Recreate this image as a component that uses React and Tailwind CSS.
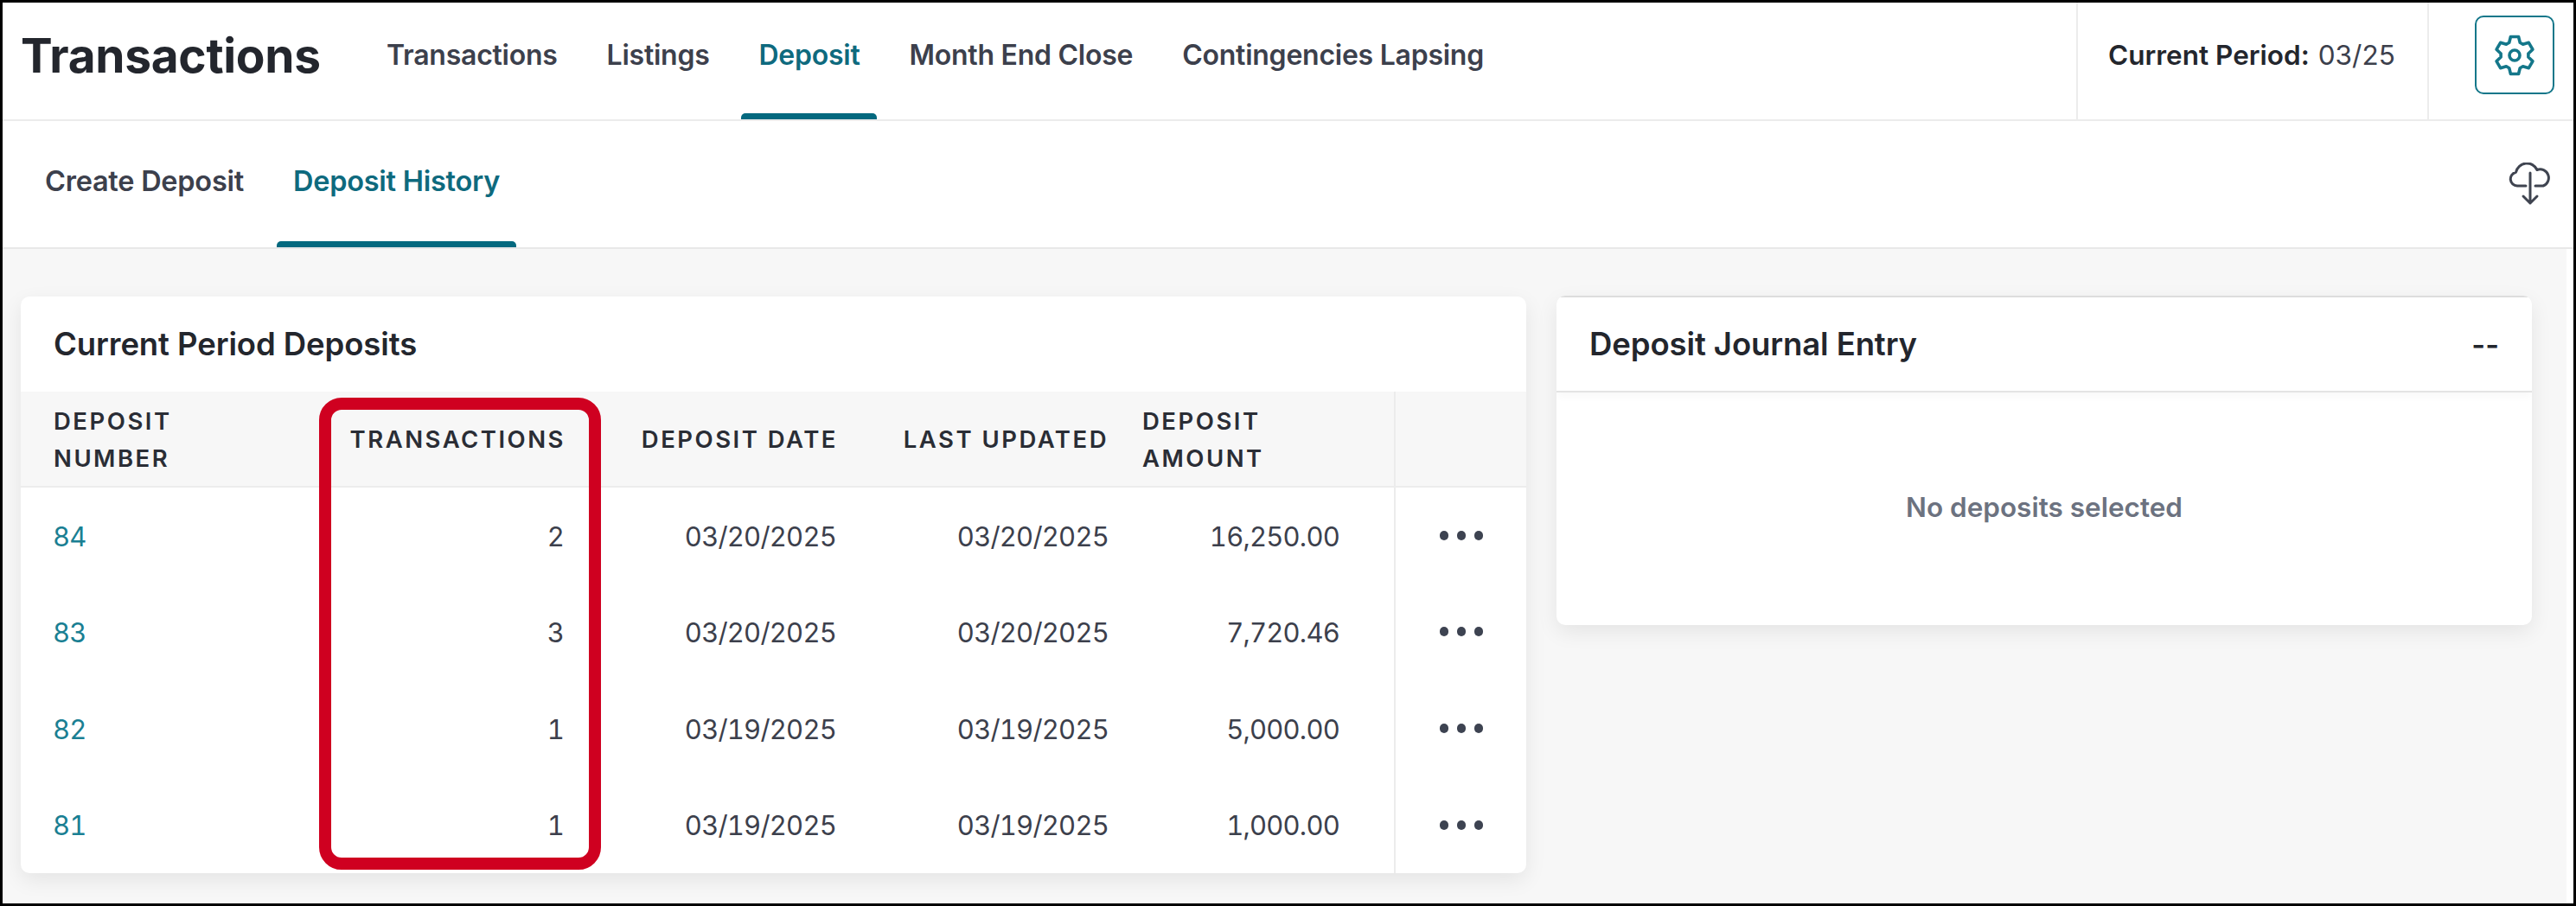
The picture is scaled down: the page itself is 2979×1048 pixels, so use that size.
import React from 'react';

const navItems = ['Transactions', 'Listings', 'Deposit', 'Month End Close', 'Contingencies Lapsing'];

const deposits = [
    { number: '84', transactions: 2, date: '03/20/2025', updated: '03/20/2025', amount: '16,250.00' },
    { number: '83', transactions: 3, date: '03/20/2025', updated: '03/20/2025', amount: '7,720.46' },
    { number: '82', transactions: 1, date: '03/19/2025', updated: '03/19/2025', amount: '5,000.00' },
    { number: '81', transactions: 1, date: '03/19/2025', updated: '03/19/2025', amount: '1,000.00' },
];

// six tooth gear outline
const gearPoints = [0, 1, 2, 3, 4, 5]
    .flatMap((k) => {
        const a = -90 + k * 60;
        return [[16, a - 23], [22, a - 12], [22, a + 12], [16, a + 23]];
    })
    .map(([r, deg]) => {
        const rad = (deg * Math.PI) / 180;
        return `${(24 + r * Math.cos(rad)).toFixed(2)},${(24 + r * Math.sin(rad)).toFixed(2)}`;
    })
    .join(' ');

const GearIcon = () => (
    <svg width="48" height="48" viewBox="0 0 48 48" fill="none" stroke="#14778a" strokeWidth="3.6" strokeLinejoin="round">
        <polygon points={gearPoints} />
        <circle cx="24" cy="24" r="6" />
    </svg>
);

const CloudIcon = () => (
    <svg width="50" height="50" viewBox="0 0 50 50" fill="none" stroke="#3f4450" strokeWidth="3" strokeLinecap="round" strokeLinejoin="round">
        <path d="M20 27H10a8 8 0 0 1-1.5-15.8A13 13 0 0 1 33 8.5a9.5 9.5 0 0 1 7 18.5H31" />
        <path d="M25 12V47M17 39l8 8 8-8" />
    </svg>
);

const App = () => {
    return (
        <div className="relative w-[2979px] h-[1048px] border-[3px] border-black bg-white flex flex-col font-[Inter,sans-serif] overflow-hidden">
            {/* Top nav */}
            <div className="flex items-stretch h-[137px] border-b-2 border-[#ececec] shrink-0 whitespace-nowrap">
                <h1 className="w-[424px] shrink-0 pl-[21px] pb-[12px] flex items-center text-[55px] font-bold text-[#23262d] tracking-[-0.3px]">
                    Transactions
                </h1>
                <nav className="flex flex-1 min-w-0 gap-[17px]">
                    {navItems.map((item) => (
                        <a
                            key={item}
                            className={`relative flex items-center px-[20px] pb-[13px] text-[32px] tracking-[-0.25px] font-semibold ${item === 'Deposit' ? 'text-[#0e6a7e]' : 'text-[#3c404c]'}`}
                        >
                            {item}
                            {item === 'Deposit' && (
                                <span className="absolute left-0 right-0 bottom-0 h-[7px] rounded-t-[5px] bg-[#04697f]" />
                            )}
                        </a>
                    ))}
                </nav>
                <div className="w-[406px] shrink-0 flex items-center pl-[35px] pb-[14px] border-l-2 border-[#ececec] text-[31.5px] text-[#3c404c]">
                    <span className="font-semibold text-[#23262d] mr-[10px]">Current Period:</span>03/25
                </div>
                <div className="w-[169px] shrink-0 flex items-start pt-[15px] pl-[53px] border-l-2 border-[#ececec]">
                    <button className="w-[92px] h-[91px] flex items-center justify-center rounded-[10px] border-2 border-[#14778a]">
                        <GearIcon />
                    </button>
                </div>
            </div>

            {/* Sub tabs */}
            <div className="flex items-stretch justify-between h-[148px] border-b-2 border-[#e8e8e8] shrink-0 pl-[30px] pr-[25px]">
                <div className="flex gap-[19px]">
                    <a className="flex items-center px-[19px] pb-[6px] text-[32.5px] tracking-[-0.25px] font-semibold text-[#3c404c]">Create Deposit</a>
                    <a className="relative flex items-center px-[19px] pb-[6px] text-[32.5px] tracking-[-0.25px] font-semibold text-[#0e6a7e]">
                        Deposit History
                        <span className="absolute left-0 right-0 bottom-0 h-[7px] rounded-t-[5px] bg-[#04697f]" />
                    </a>
                </div>
                <div className="flex items-center">
                    <CloudIcon />
                </div>
            </div>

            {/* Content */}
            <div className="flex-1 flex items-start gap-[35px] bg-[#f7f7f7] mr-[8px] pt-[55px] pl-[21px]">
                <section className="w-[1741px] h-[667px] bg-white rounded-[10px] shadow-[0_8px_24px_rgba(0,0,0,0.08)] overflow-hidden">
                    <h2 className="h-[110px] flex items-center pl-[38px] text-[36.5px] tracking-[-0.1px] font-semibold text-[#23262d]">Current Period Deposits</h2>
                    <table className="w-full table-fixed border-collapse">
                        <colgroup>
                            <col className="w-[360px]" />
                            <col className="w-[288px]" />
                            <col className="w-[315px]" />
                            <col className="w-[315px]" />
                            <col className="w-[311px]" />
                            <col className="w-[152px]" />
                        </colgroup>
                        <thead>
                            <tr className="h-[110px] bg-[#f7f7f7] border-b-2 border-[#ececec] text-[27.5px] leading-[43px] tracking-[2.5px] text-[#2a2d35]">
                                <th className="pl-[38px] pt-[2px] text-left font-semibold">DEPOSIT<br />NUMBER</th>
                                <th className="pr-[18px] pt-[2px] text-right font-semibold">TRANSACTIONS</th>
                                <th className="pr-[18px] pt-[2px] text-right font-semibold">DEPOSIT DATE</th>
                                <th className="pr-[20px] pt-[2px] text-right font-semibold">LAST UPDATED</th>
                                <th className="pl-[19px] pt-[2px] text-left font-semibold">DEPOSIT<br />AMOUNT</th>
                                <th className="border-l-2 border-[#ececec]" />
                            </tr>
                        </thead>
                        <tbody className="text-[31px] text-[#3c404c] tabular-nums tracking-[-0.8px]">
                            {deposits.map((d) => (
                                <tr key={d.number} className="h-[111.75px]">
                                    <td className="pl-[37px] pt-[3px] text-[#1a7f93]">{d.number}</td>
                                    <td className="pr-[20px] pt-[3px] text-right">{d.transactions}</td>
                                    <td className="pr-[20px] pt-[3px] text-right">{d.date}</td>
                                    <td className="pr-[20px] pt-[3px] text-right">{d.updated}</td>
                                    <td className="pr-[63px] pt-[3px] text-right">{d.amount}</td>
                                    <td className="border-l-2 border-[#ececec]">
                                        <div className="flex justify-center gap-[10px]">
                                            <span className="w-[10px] h-[11px] rounded-full bg-[#3d4351]" />
                                            <span className="w-[10px] h-[11px] rounded-full bg-[#3d4351]" />
                                            <span className="w-[10px] h-[11px] rounded-full bg-[#3d4351]" />
                                        </div>
                                    </td>
                                </tr>
                            ))}
                        </tbody>
                    </table>
                </section>

                <section className="w-[1128px] h-[381px] -mt-px bg-white rounded-[10px] shadow-[0_8px_24px_rgba(0,0,0,0.08)] flex flex-col overflow-hidden">
                    <div className="h-[112px] shrink-0 flex items-center justify-between px-[38px] border-b-2 border-t-2 border-[#e4e4e4] border-t-[#dddddd] shadow-[0_4px_10px_rgba(0,0,0,0.03)]">
                        <h2 className="text-[36.5px] tracking-[-0.1px] font-semibold text-[#23262d]">Deposit Journal Entry</h2>
                        <span className="text-[34px] font-semibold text-[#23262d]">--</span>
                    </div>
                    <div className="flex-1 flex items-center justify-center pb-[3px] text-[31.5px] font-semibold text-[#6c7280]">
                        No deposits selected
                    </div>
                </section>
            </div>

            {/* Red callout drawn over the Transactions column */}
            <div className="absolute left-[366px] top-[457px] w-[326px] h-[546px] border-[14px] border-[#cf0020] rounded-[26px] pointer-events-none" />
        </div>
    );
};

export default App;
